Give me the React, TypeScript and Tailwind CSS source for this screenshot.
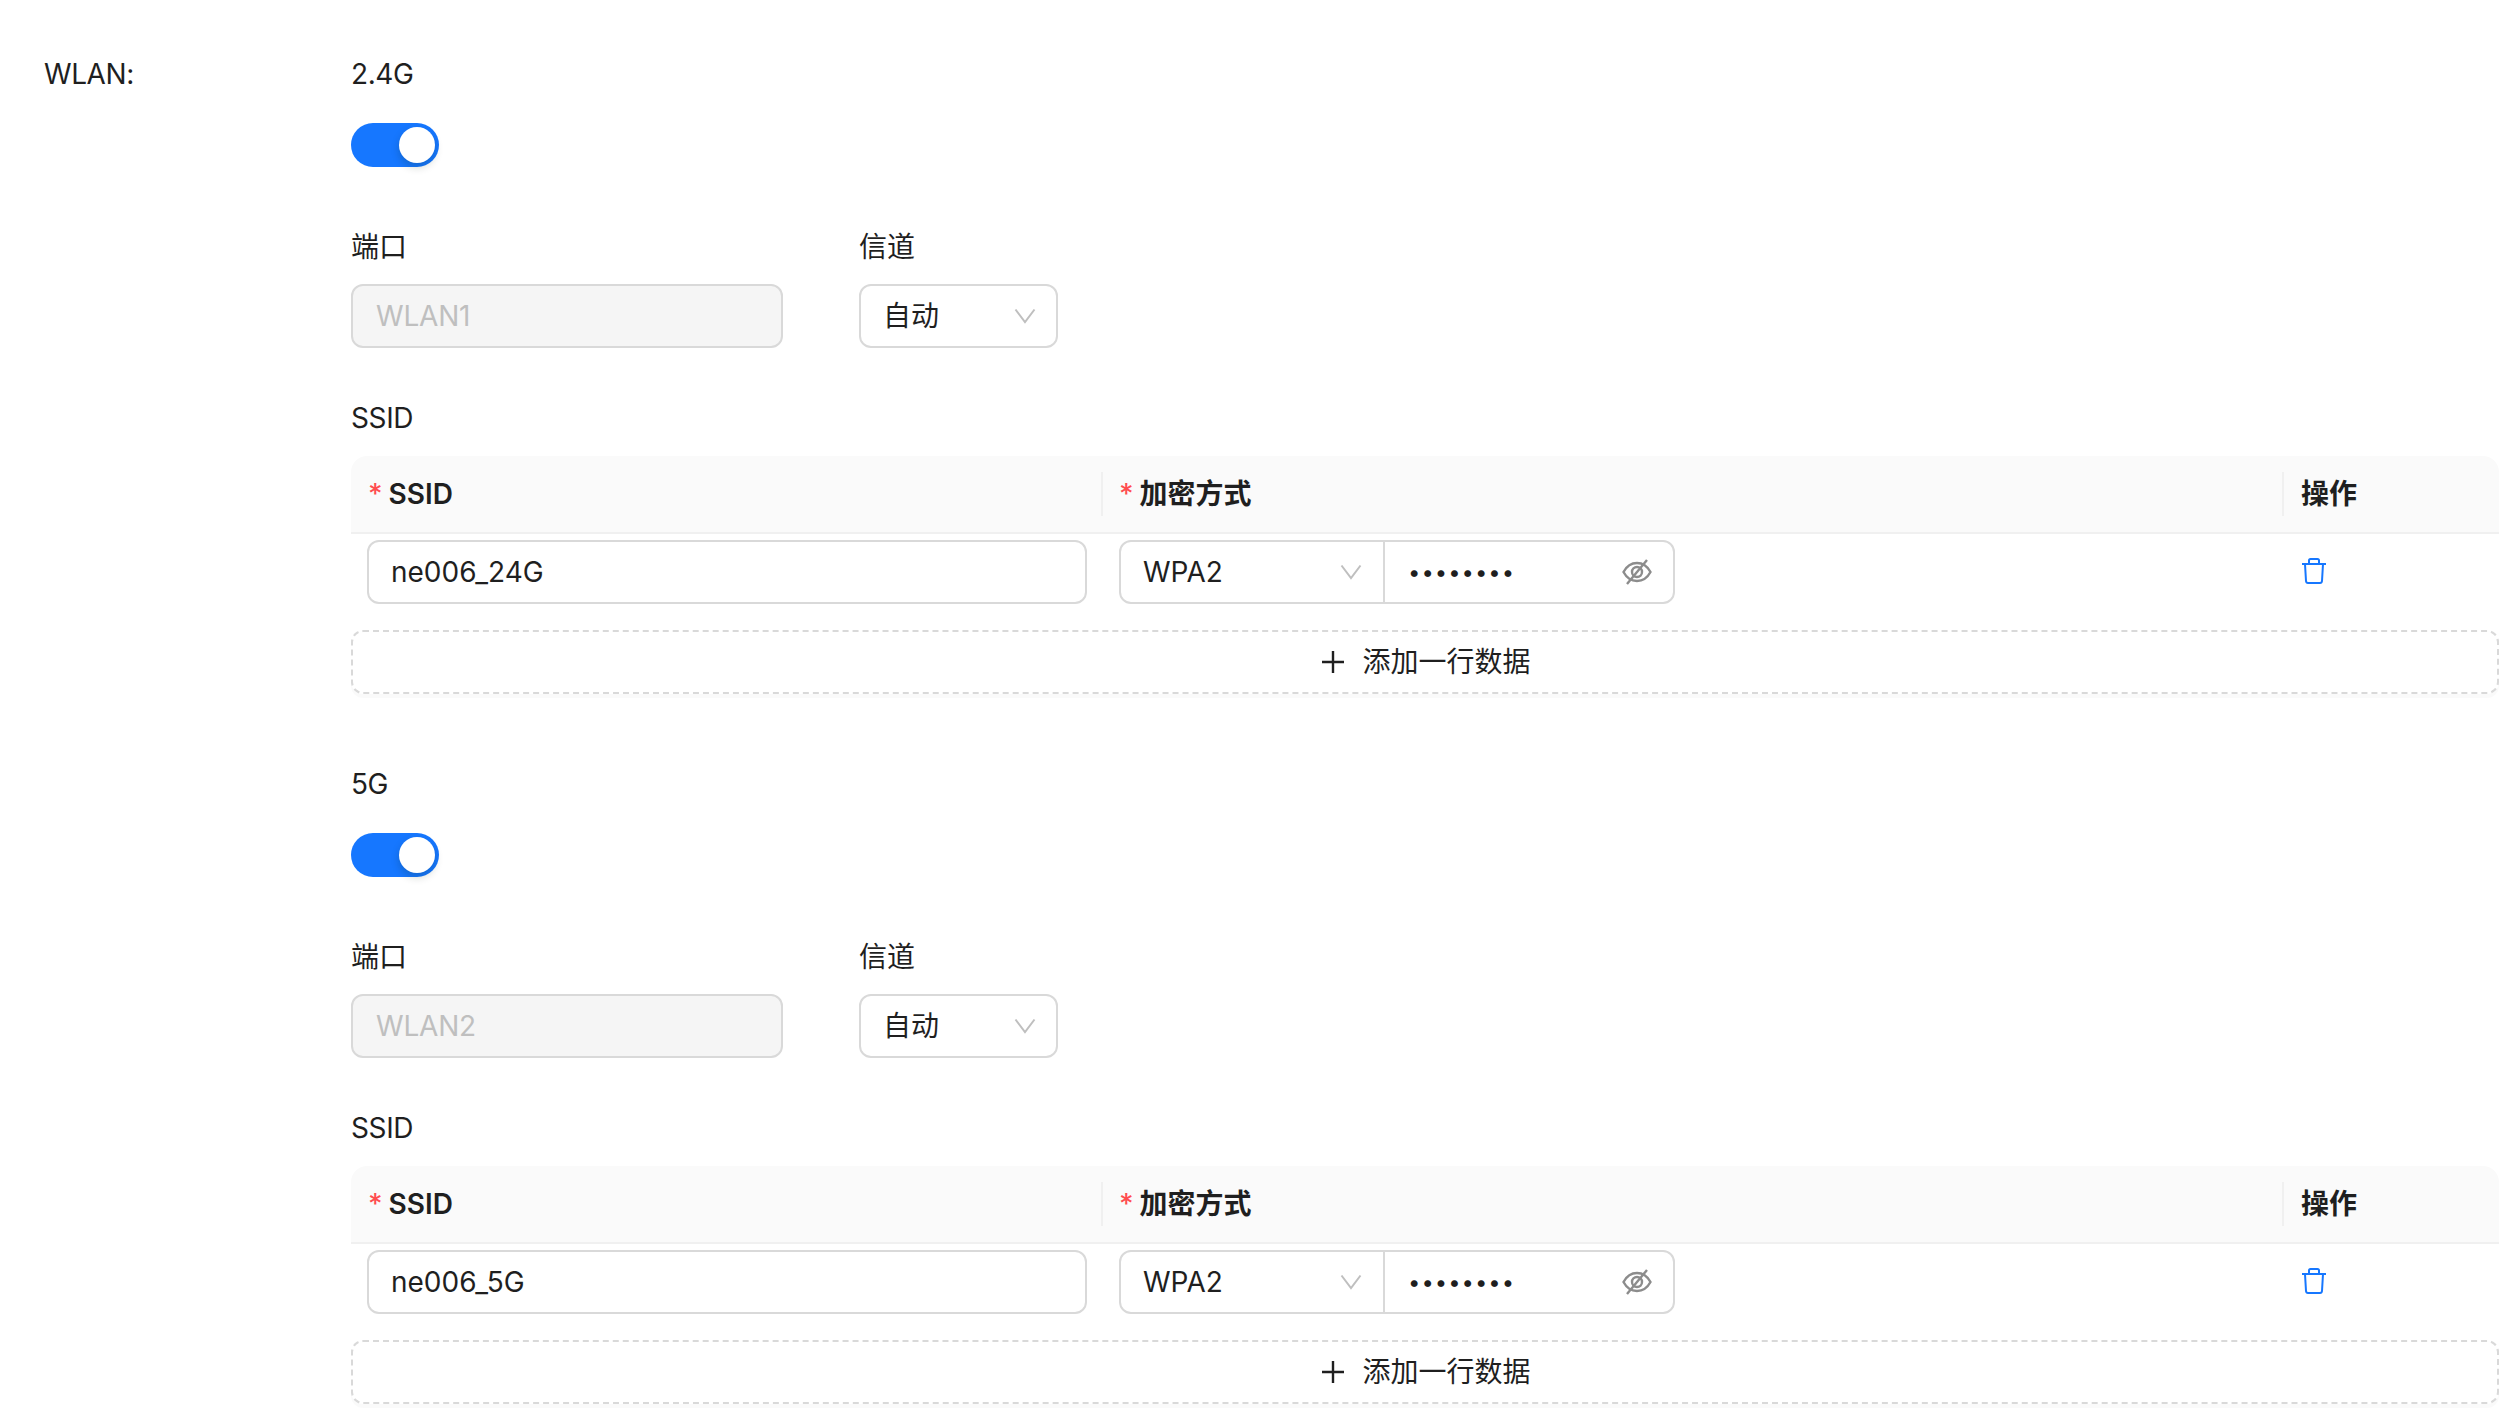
import React from 'react';

const FONT = "font-['Inter','Noto_Sans_CJK_SC',sans-serif]";

function Chevron() {
  return (
    <svg width="22" height="16" viewBox="0 0 22 16" fill="none" className="shrink-0">
      <path d="M1.5 1.5 L11 14 L20.5 1.5" stroke="#bfbfbf" strokeWidth="2" />
    </svg>
  );
}

function EyeOff() {
  return (
    <svg width="30" height="26" viewBox="0 0 30 26" fill="none" stroke="#8c8c8c" strokeWidth="2.4">
      <path d="M1.5 13 C5 6.5 9.5 4 15 4 C20.5 4 25 6.5 28.5 13 C25 19.5 20.5 22 15 22 C9.5 22 5 19.5 1.5 13 Z" />
      <circle cx="15" cy="13" r="5" />
      <path d="M25 1 L5 25" />
    </svg>
  );
}

function Trash() {
  return (
    <svg width="24" height="26" viewBox="0 0 24 26" fill="none" stroke="#1677ff" strokeWidth="2">
      <path d="M0 6 H24" />
      <path d="M7 6 V2.5 Q7 1 8.5 1 H15.5 Q17 1 17 2.5 V6" />
      <path d="M3 6 L4 23 Q4.2 25 6 25 H18 Q19.8 25 20 23 L21 6" />
    </svg>
  );
}

function Plus() {
  return (
    <svg width="22" height="22" viewBox="0 0 22 22" stroke="#1f1f1f" strokeWidth="2.4">
      <path d="M0 11 H22 M11 0 V22" />
    </svg>
  );
}

function Required() {
  return <span className="text-[#ff4d4f] text-[28px] font-medium leading-none mr-[6px]">*</span>;
}

function BandSection({ band, port, ssid }: { band: string; port: string; ssid: string }) {
  return (
    <section className="h-[710px]">
      <div className="h-[44px] leading-[44px] tracking-[-0.4px]">{band}</div>

      {/* Switch */}
      <div className="mt-[27px] w-[88px] h-[44px] rounded-full bg-[#1677ff] p-[4px] flex justify-end">
        <div className="w-[36px] h-[36px] rounded-full bg-white shadow-[0_4px_8px_rgba(0,35,11,0.2)]" />
      </div>

      {/* Port and channel */}
      <div className="mt-[58px] flex gap-[76px]">
        <div className="w-[432px]">
          <div className="h-[44px] leading-[44px]">端口</div>
          <div className="mt-[15px] h-[64px] px-[23px] flex items-center rounded-[12px] border-2 border-[#d9d9d9] bg-[#f5f5f5] text-[#bfbfbf] tracking-[-0.2px]">
            {port}
          </div>
        </div>
        <div className="w-[199px]">
          <div className="h-[44px] leading-[44px]">信道</div>
          <div className="mt-[15px] h-[64px] pl-[22px] pr-[20px] flex items-center justify-between rounded-[12px] border-2 border-[#d9d9d9] bg-white">
            <span>自动</span>
            <Chevron />
          </div>
        </div>
      </div>

      <div className="mt-[48px] h-[44px] leading-[44px] tracking-[-0.4px]">SSID</div>

      {/* SSID table */}
      <div className="mt-[16px]">
        <div className="h-[78px] flex items-center bg-[#fafafa] rounded-t-[16px] border-b-2 border-[#f0f0f0] font-semibold">
          <div className="w-[752px] h-[44px] pl-[17px] flex items-center border-r-2 border-[#f0f0f0]">
            <Required />
            SSID
          </div>
          <div className="flex-1 h-[44px] pl-[16px] flex items-center border-r-2 border-[#f0f0f0]">
            <Required />
            加密方式
          </div>
          <div className="w-[215px] pl-[17px]">操作</div>
        </div>

        <div className="flex items-start pt-[6px] h-[78px]">
          <div className="w-[752px] pl-[16px] pr-[16px]">
            <div className="h-[64px] px-[22px] flex items-center rounded-[12px] border-2 border-[#d9d9d9] bg-white">
              {ssid}
            </div>
          </div>
          <div className="flex-1 pl-[16px]">
            <div className="w-[556px] h-[64px] flex rounded-[12px] border-2 border-[#d9d9d9] bg-white">
              <div className="w-[264px] pl-[22px] pr-[21px] flex items-center justify-between border-r-2 border-[#d9d9d9]">
                <span>WPA2</span>
                <Chevron />
              </div>
              <div className="flex-1 pl-[23px] pr-[21px] flex items-center justify-between">
                <span className="text-[22px] tracking-[1px]">••••••••</span>
                <EyeOff />
              </div>
            </div>
          </div>
          <div className="w-[215px] pl-[18px] pt-[18px] flex">
            <Trash />
          </div>
        </div>

        <div className="mt-[18px] h-[64px] pl-[3px] flex items-center justify-center gap-[18px] rounded-[12px] border-2 border-dashed border-[#d9d9d9] bg-white shadow-[0_4px_0_rgba(0,0,0,0.02)]">
          <Plus />
          <span>添加一行数据</span>
        </div>
      </div>
    </section>
  );
}

export default function App() {
  return (
    <div className={`${FONT} w-[2520px] h-[1414px] overflow-hidden bg-white text-[28px] text-[#1f1f1f] flex pt-[52px]`}>
      <div className="w-[351px] pl-[44px] h-[44px] leading-[44px] shrink-0 tracking-[-0.4px]">WLAN:</div>
      <div className="w-[2148px]">
        <BandSection band="2.4G" port="WLAN1" ssid="ne006_24G" />
        <BandSection band="5G" port="WLAN2" ssid="ne006_5G" />
      </div>
    </div>
  );
}
